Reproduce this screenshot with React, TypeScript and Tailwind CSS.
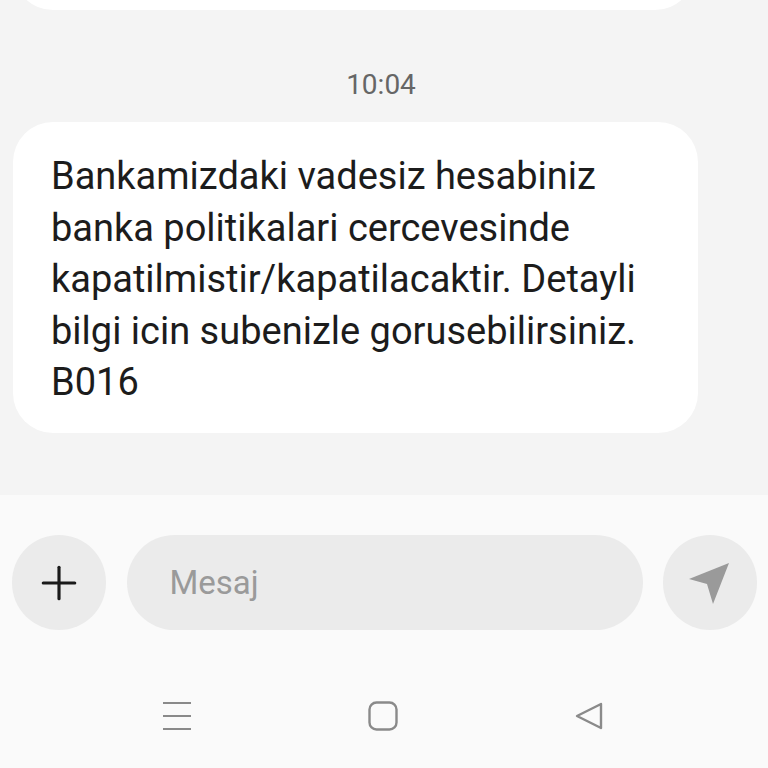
import { Plus } from "lucide-react";

const lines = [
  "Bankamizdaki vadesiz hesabiniz",
  "banka politikalari cercevesinde",
  "kapatilmistir/kapatilacaktir. Detayli",
  "bilgi icin subenizle gorusebilirsiniz.",
  "B016",
];

export default function App() {
  return (
    <div
      className="flex h-[768px] w-[768px] flex-col overflow-hidden bg-[#fafafa]"
      style={{ fontFamily: "Roboto, 'Noto Sans', sans-serif" }}
    >
      {/* Conversation */}
      <div className="flex h-[495px] flex-col bg-[#f4f4f4] px-[13px]">
        <div className="-mt-[30px] h-[40px] w-[682px] rounded-b-[40px] bg-white" />
        <div className="mt-[57px] pr-[6px] text-center text-[28px] leading-[36px] text-[#666666]">10:04</div>
        <div className="mt-[19px] w-[685px] rounded-[40px] bg-white pb-[24px] pl-[38px] pr-[10px] pt-[29px]">
          {lines.map((l, i) => (
            <div key={i} className="whitespace-nowrap text-[38px] leading-[51.5px] text-[#1c1c1c]">
              {l}
            </div>
          ))}
        </div>
      </div>

      {/* Composer */}
      <div className="mt-[40px] flex items-center justify-between pl-[12px] pr-[11px]">
        <button className="flex h-[95px] w-[94px] items-center justify-center rounded-full bg-[#ebebeb]">
          <Plus className="h-[54px] w-[54px] text-[#1a1a1a]" strokeWidth={1.4} />
        </button>
        <div className="flex h-[95px] w-[516px] items-center rounded-full bg-[#ebebeb] pl-[43px] text-[33px] text-[#9a9a9a]">
          Mesaj
        </div>
        <button className="flex h-[95px] w-[94px] items-center justify-center rounded-full bg-[#ebebeb]">
          <svg width="44" height="44" viewBox="0 0 44 44">
            <path d="M41 2 L1 18 L19 23 L25 43 Z" fill="#9a9a9a" />
          </svg>
        </button>
      </div>

      {/* Nav bar */}
      <div className="mt-[71px] flex items-center justify-between pl-[162px] pr-[164px]">
        <svg width="30" height="28" viewBox="0 0 30 28">
          <path d="M1 1 H29 M1 14 H29 M1 27 H29" stroke="#8a8a8a" strokeWidth="2" />
        </svg>
        <svg width="30" height="30" viewBox="0 0 30 30">
          <rect x="1.5" y="1.5" width="27" height="27" rx="7" fill="none" stroke="#8a8a8a" strokeWidth="2.4" />
        </svg>
        <svg width="30" height="30" viewBox="0 0 30 30">
          <path d="M27 3 L3 15 L27 27 Z" fill="none" stroke="#8a8a8a" strokeWidth="2.4" strokeLinejoin="round" />
        </svg>
      </div>
    </div>
  );
}
